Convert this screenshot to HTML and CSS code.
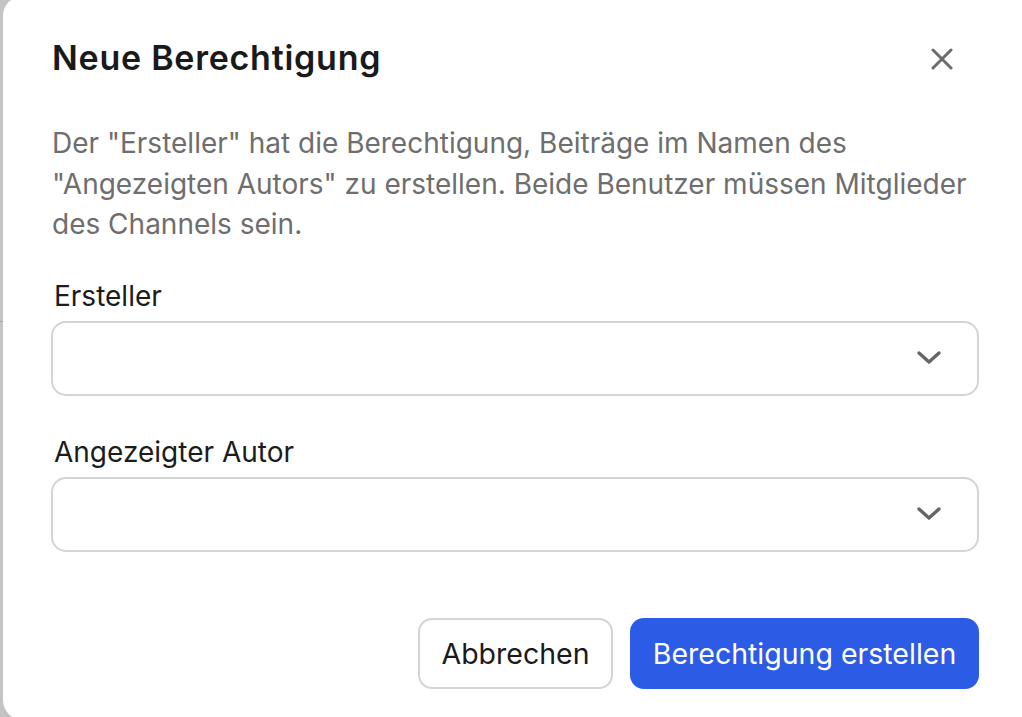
FILE: index.html
```html
<!DOCTYPE html>
<html lang="de">
<head>
   <meta charset="UTF-8">
   <meta name="viewport" content="width=device-width, initial-scale=1.0">
   <title>Neue Berechtigung</title>
   <link rel="stylesheet" href="styles.css">
</head>
<body>
   <div class="backdrop-line"></div>
   <div class="dialog">
      <div class="dialog-header">
         <h2 class="dialog-title">Neue Berechtigung</h2>
         <button class="close-btn" aria-label="Schließen">
            <svg width="22" height="22" viewBox="0 0 22 22">
               <path d="M2 2 L20 20 M20 2 L2 20" stroke="#6b6b6b" stroke-width="3" stroke-linecap="round" fill="none"/>
            </svg>
         </button>
      </div>

      <p class="dialog-desc">Der "Ersteller" hat die Berechtigung, Beiträge im Namen des "Angezeigten Autors" zu erstellen. Beide Benutzer müssen Mitglieder des Channels sein.</p>

      <div class="fields">
         <div class="field">
            <label class="field-label">Ersteller</label>
            <div class="select">
               <svg class="chevron" width="26" height="16" viewBox="0 0 26 16">
                  <path d="M3 3 L13 12 L23 3" stroke="#666" stroke-width="3.4" stroke-linecap="round" stroke-linejoin="round" fill="none"/>
               </svg>
            </div>
         </div>
         <div class="field">
            <label class="field-label">Angezeigter Autor</label>
            <div class="select">
               <svg class="chevron" width="26" height="16" viewBox="0 0 26 16">
                  <path d="M3 3 L13 12 L23 3" stroke="#666" stroke-width="3.4" stroke-linecap="round" stroke-linejoin="round" fill="none"/>
               </svg>
            </div>
         </div>
      </div>

      <div class="dialog-actions">
         <button class="btn btn-secondary">Abbrechen</button>
         <button class="btn btn-primary">Berechtigung erstellen</button>
      </div>
   </div>
</body>
</html>
```

FILE: styles.css
```css
html, body {
   margin: 0;
   height: 100%;
   overflow: hidden;
}
body {
   font-family: Inter, "Noto Sans", sans-serif;
   background: #c4c4c4;
   position: relative;
}
.backdrop-line {
   position: absolute;
   left: 0;
   top: 321px;
   width: 3px;
   height: 1px;
   background: #a8a8a8;
}
.dialog {
   margin: -4px 0 0 3px;
   width: 1030px;
   height: 724px;
   box-sizing: border-box;
   background: #fff;
   border-radius: 20px;
   padding: 44px 0 0 48px;
   position: relative;
}
.dialog-header {
   display: flex;
   align-items: center;
   justify-content: space-between;
   width: 926px;
   padding-left: 1px;
   box-sizing: border-box;
}
.dialog-title {
   margin: 0;
   font-size: 34px;
   line-height: 36px;
   font-weight: 600;
   color: #1a1a1a;
   letter-spacing: 0.75px;
}
.close-btn {
   background: none;
   border: none;
   padding: 0;
   margin: 1px 24px 0 0;
   width: 22px;
   height: 22px;
   cursor: pointer;
   display: flex;
}
.dialog-desc {
   margin: 47px 0 0;
   padding-left: 1px;
   width: 925px;
   font-size: 28px;
   line-height: 40.5px;
   color: #6e6e6e;
}
.fields {
   margin-top: 35px;
   display: flex;
   flex-direction: column;
   gap: 40px;
   width: 928px;
}
.field {
   display: flex;
   flex-direction: column;
   gap: 9px;
}
.field-label {
   font-size: 28px;
   line-height: 32px;
   color: #1c1c1c;
   padding-left: 3px;
}
.select {
   height: 75px;
   box-sizing: border-box;
   border: 2px solid #d4d4d4;
   border-radius: 15px;
   display: flex;
   align-items: center;
   justify-content: flex-end;
   padding-right: 35px;
}
.dialog-actions {
   margin-top: 66px;
   width: 928px;
   display: flex;
   justify-content: flex-end;
   gap: 17px;
}
.btn {
   height: 71px;
   box-sizing: border-box;
   border-radius: 14px;
   font-family: Inter, "Noto Sans", sans-serif;
   font-size: 28.5px;
   cursor: pointer;
   padding: 0;
}
.btn-secondary {
   background: #fff;
   border: 2px solid #d4d4d4;
   color: #1a1a1a;
   width: 195px;
}
.btn-primary {
   background: #2c5be6;
   border: none;
   color: #fff;
   width: 349px;
}
```
